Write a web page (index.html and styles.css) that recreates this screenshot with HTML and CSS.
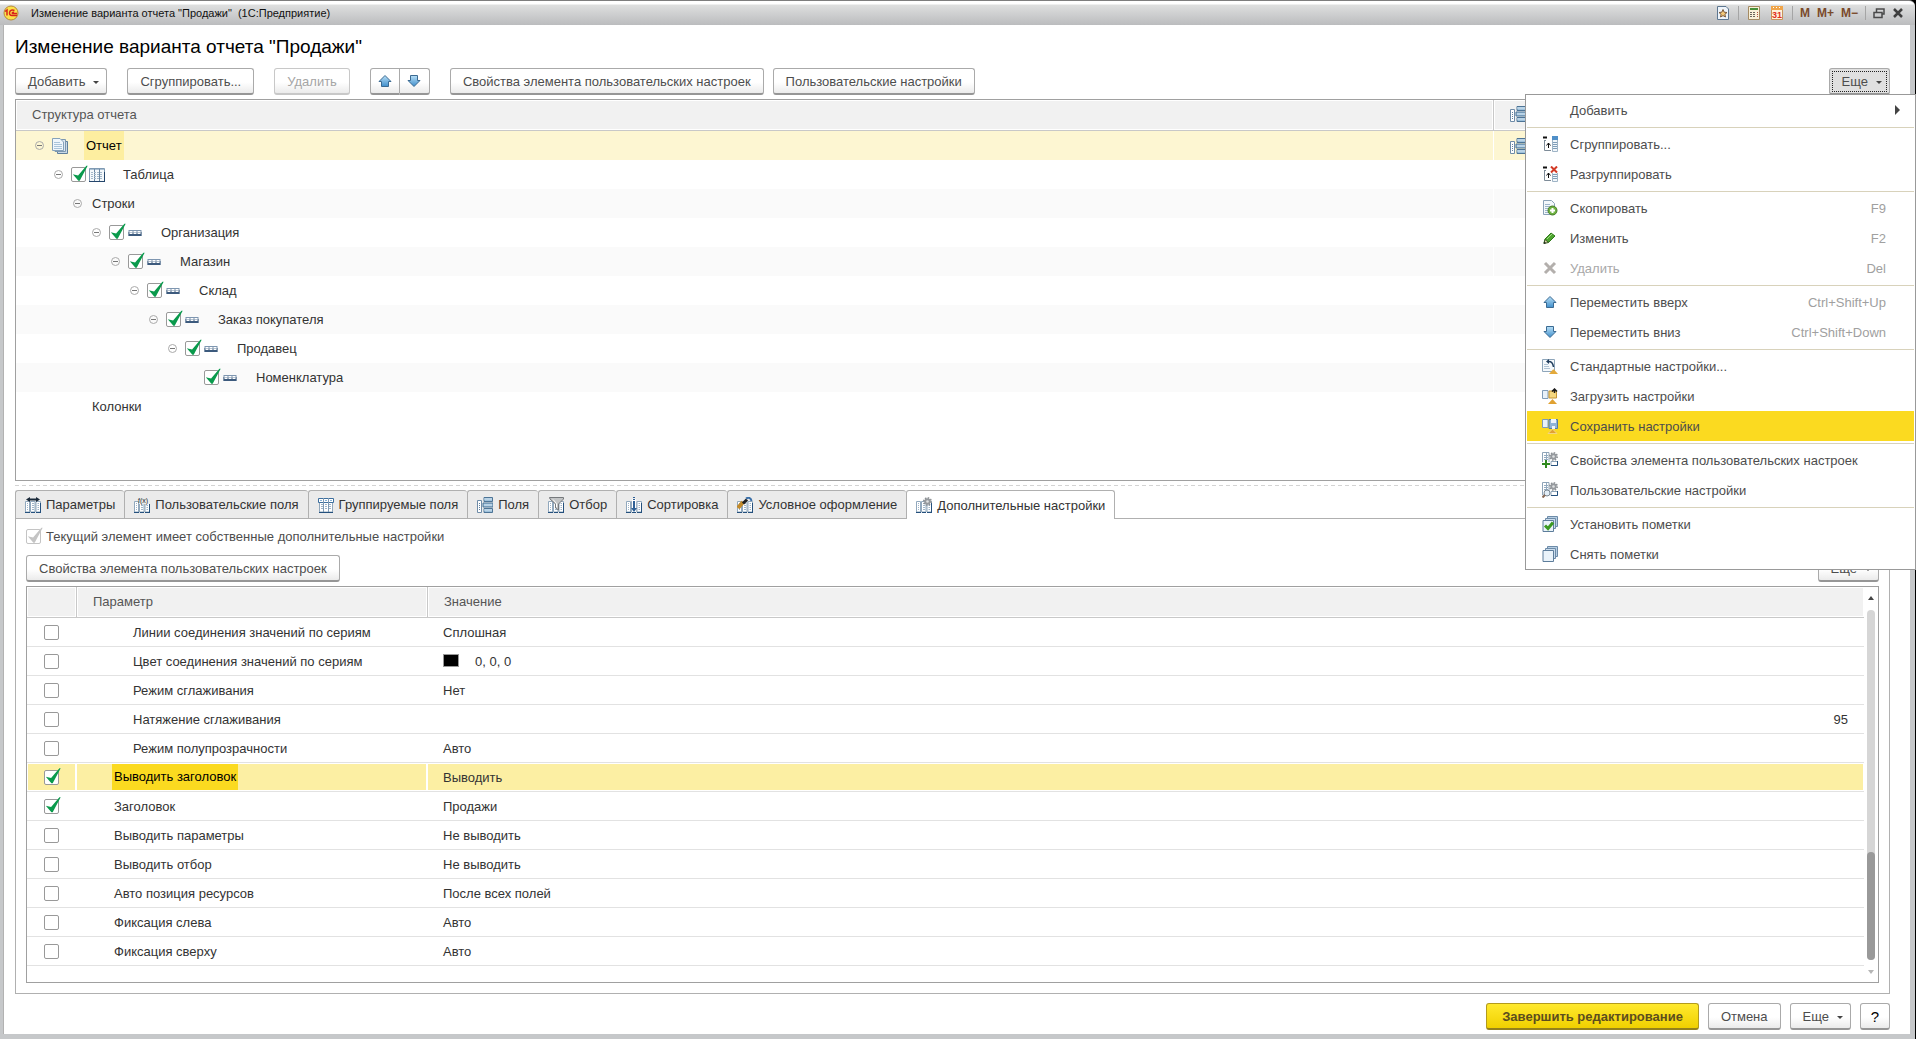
FILE: index.html
```html
<!DOCTYPE html>
<html lang="ru">
<head>
    <meta charset="UTF-8">
    <meta name="viewport" content="width=device-width, initial-scale=1.0">
    <title>Изменение варианта отчета "Продажи"</title>
    <link rel="stylesheet" href="styles.css">
</head>
<body>
    <!-- Иконки -->
    <svg class="sprite" xmlns="http://www.w3.org/2000/svg">
        <linearGradient id="blue" x1="0" y1="0" x2="0" y2="1">
            <stop offset="0" stop-color="#b9e0f7"/>
            <stop offset="1" stop-color="#3f8ecb"/>
        </linearGradient>
        <symbol id="i-up" viewBox="0 0 16 16">
            <path d="M8 2.5 14 8.5H11.5V13.5H4.5V8.5H2Z" fill="url(#blue)" stroke="#3b6a92"/>
        </symbol>
        <symbol id="i-down" viewBox="0 0 16 16">
            <path d="M8 13.5 14 7.5H11.5V2.5H4.5V7.5H2Z" fill="url(#blue)" stroke="#3b6a92"/>
        </symbol>
        <symbol id="i-report" viewBox="0 0 16 16">
            <path d="M5.5 3.5H15.5V15.5H5.5Z" fill="#c9d9e8" stroke="#5f7f9c"/>
            <path d="M3 1.5H13.5V13.5H3Z" fill="#dce8f2" stroke="#7d98b0"/>
            <path d="M.5.5H8L11.5 4V12.5H.5Z" fill="#eff6fc" stroke="#86a2ba"/>
            <path d="M2 4.5H8M2 6.5H10M2 8.5H10M2 10.5H10" stroke="#a9c4da"/>
        </symbol>
        <symbol id="i-table" viewBox="0 0 16 16">
            <path d="M.5 1.5H15.5V14.5H.5Z" fill="#f4f8fb" stroke="#7f9ab3"/>
            <path d="M1 2.5H15" stroke="#a9bfd2"/>
            <path d="M5.5 2V14M10.5 2V14" stroke="#6b88a4"/>
            <path d="M2 5.5H14M2 7.5H14M2 9.5H14M2 11.5H14" stroke="#a3b7c9" stroke-dasharray="2 1"/>
            <path d="M0 14.5H16M15.5 5V15" stroke="#24456b"/>
        </symbol>
        <symbol id="i-group" viewBox="0 0 13 16">
            <path d="M0 5H13V11H0Z" fill="#7e96b0"/>
            <path d="M0 7H13V11H0Z" fill="#3c5a7d"/>
            <path d="M1 6H4V9H1ZM5 6H8V9H5ZM9 6H12V9H9Z" fill="#fff"/>
            <path d="M2 7.5H3M6 7.5H7M10 7.5H11" stroke="#6d8aa8"/>
        </symbol>
        <symbol id="i-cols" viewBox="0 0 16 16">
            <path d="M.5 4.5H4.5V15H.5ZM5.5 4.5H10V15H5.5ZM11 4.5H15.5V15H11Z" fill="#fff" stroke="#91a8bd"/>
            <path d="M2 6.5H3M7 6.5H9M12.5 6.5H14M2 8.5H3M7 8.5H9M12.5 8.5H14M2 10.5H3M7 10.5H9M12.5 10.5H14M2 12.5H3M7 12.5H9M12.5 12.5H14" stroke="#9fb4c8"/>
            <path d="M0 15.5H5M6 15.5H10M11 15.5H16M15.5 6V16" stroke="#24507d"/>
        </symbol>
        <symbol id="i-params" viewBox="0 0 16 16">
            <use href="#i-cols"/>
            <path d="M4 2.5H12" stroke="#1b2a3a" stroke-width="2"/>
            <path d="M5 0V5L1 2.5ZM11 0V5L15 2.5Z" fill="#1b2a3a"/>
        </symbol>
        <symbol id="i-grouped" viewBox="0 0 16 16">
            <path d="M1.5 5V15H14.5V5" fill="#fff" stroke="#91a8bd"/>
            <path d="M.5 1.5H15.5V5.5H.5Z" fill="#fff" stroke="#3d6f9e"/>
            <path d="M5.5 1V15M10.5 1V15" stroke="#7e9ab5"/>
            <path d="M2 3.5H4M7 3.5H9M12 3.5H14" stroke="#85b1d6"/>
            <path d="M3 7.5H14M3 9.5H14M3 11.5H14" stroke="#9db3c7" stroke-dasharray="2 2"/>
            <path d="M1 15.5H15" stroke="#24507d"/>
        </symbol>
        <symbol id="i-fields" viewBox="0 0 16 16">
            <path d="M.5 3.5H4.5V15.5H.5Z" fill="#fff" stroke="#6f8ca8"/>
            <path d="M2 6.5H3M2 8.5H3M2 10.5H3M2 12.5H3" stroke="#5f7f9e"/>
            <path d="M7 .5H15.5V4.5H7ZM6 6H16V10H6ZM7 11.5H15.5V15.5H7Z" fill="#9fc1db" stroke="#4d7496"/>
            <path d="M7 2H15M7 8H15M7 13H15" stroke="#d3e5f2"/>
        </symbol>
        <symbol id="i-filter" viewBox="0 0 16 16">
            <use href="#i-cols"/>
            <path d="M1.5.5H15.5V2L10.5 7V13L7.5 11V7L2 2Z" fill="#c3c5c6" stroke="#76797c"/>
            <path d="M5 2.5 8.5 6.5V10" fill="none" stroke="#fff"/>
        </symbol>
        <symbol id="i-sort" viewBox="0 0 16 16">
            <use href="#i-cols"/>
            <path d="M6 2H10V15H6Z" fill="#fff"/>
            <path d="M8 0V5" stroke="#2f6096" stroke-width="2" stroke-dasharray="1 1"/>
            <path d="M8 5V12" stroke="#2f6096" stroke-width="2"/>
            <path d="M5 11H11L8 15Z" fill="#2f6096"/>
        </symbol>
        <symbol id="i-brush" viewBox="0 0 16 16">
            <use href="#i-cols"/>
            <path d="M1 11 6 5" stroke="#c28a2b" stroke-width="4"/>
            <path d="M6 6.5 10 2.5" stroke="#222" stroke-width="3"/>
            <path d="M9 1.500C12 0 14 1 14.5 4" fill="none" stroke="#3a6fa8" stroke-width="2"/>
        </symbol>
        <symbol id="i-gear" viewBox="0 0 10 10">
            <circle cx="5" cy="5" r="4" fill="none" stroke="#8b8f93" stroke-width="2" stroke-dasharray="1.6 1.5"/>
            <circle cx="5" cy="5" r="2.5" fill="#dfe1e2" stroke="#95999d" stroke-width="2"/>
        </symbol>
        <symbol id="i-extra" viewBox="0 0 16 16">
            <use href="#i-cols"/>
            <use href="#i-gear" x="7" y="0" width="9" height="9"/>
        </symbol>
        <symbol id="i-togroup" viewBox="0 0 16 16">
            <path d="M1 1.5H5" stroke="#111" stroke-width="2"/>
            <path d="M2.5 4V14.5H9M2.5 4.5H4" fill="none" stroke="#7e8c99"/>
            <path d="M6.5 12V7M4.5 9.5 6.5 7 8.5 9.5" fill="none" stroke="#111"/>
            <path d="M10.5.5H15.5V15.5H10.5Z" fill="#f2f7fb" stroke="#9fb4c6"/>
            <path d="M10 0H16V4H10Z" fill="#4f8fc8"/>
            <path d="M11 6.5H15M11 8.5H15M11 10.5H15M11 12.5H15" stroke="#7f9db8"/>
        </symbol>
        <symbol id="i-ungroup" viewBox="0 0 16 16">
            <use href="#i-togroup"/>
            <path d="M8 0H16V7H8Z" fill="#fff"/>
            <path d="M9 .5 15 6.5M15 .5 9 6.5" stroke="#d23a26" stroke-width="2"/>
        </symbol>
        <symbol id="i-copy" viewBox="0 0 16 16">
            <path d="M1.5.5H9.5L12.5 3.5V14.5H1.5Z" fill="#f3f8fc" stroke="#8aa2b8"/>
            <path d="M3 4.5H8M3 6.5H10M3 8.5H8M3 10.5H7M3 12.5H6" stroke="#9db5ca"/>
            <circle cx="10.5" cy="10.5" r="4.5" fill="#6fb341" stroke="#477c29"/>
            <path d="M10.5 8V13M8 10.5H13" stroke="#fff" stroke-width="2"/>
        </symbol>
        <symbol id="i-pencil" viewBox="0 0 16 16">
            <path d="M2 13 3 9 9 3 13 6 7 12Z" fill="#4da62f" stroke="#2f7a1b"/>
            <path d="M5 9 10 4" stroke="#a5dc83"/>
            <path d="M2 13.5 3 9.5 6.5 12.5Z" fill="#e5dcb0" stroke="#3b5c25"/>
            <path d="M1.5 14 2.5 11.5 4 13Z" fill="#222"/>
        </symbol>
        <symbol id="i-delete" viewBox="0 0 16 16">
            <path d="M3 3 13 13M13 3 3 13" stroke="#b3afac" stroke-width="3"/>
        </symbol>
        <symbol id="i-standard" viewBox="0 0 16 16">
            <path d="M.5 1.5H12.5V13.5H.5Z" fill="#f5f9fc" stroke="#8fa6ba"/>
            <path d="M2 6.5H6M2 8.5H7M2 10.5H8" stroke="#b0c4d5"/>
            <path d="M6 3.500C9 3 11 5 11.5 9" fill="none" stroke="#1f3c5c" stroke-width="1.5"/>
            <path d="M7 1V6L4 3.5Z" fill="#1f3c5c"/>
            <path d="M7 16 11 11.500H12L16 16Z" fill="#e3a93b"/>
        </symbol>
        <symbol id="i-load" viewBox="0 0 16 16">
            <path d="M.5 2.5H6V10.5H.5Z" fill="#e8f1f9" stroke="#7f9cb8"/>
            <path d="M7 3H14.5V10H7Z" fill="#f5d77f" stroke="#c59433"/>
            <path d="M12.5 5V1M10 3.5 12.5 1 15 3.5" fill="none" stroke="#1c1c1c" stroke-width="1.500"/>
            <path d="M6 16 10.5 11 15 16Z" fill="#e0a132"/>
        </symbol>
        <symbol id="i-save" viewBox="0 0 16 16">
            <path d="M.5 1.5H6V9.5H.5Z" fill="#e8f1f9" stroke="#7f9cb8"/>
            <path d="M7 1.5H15.5V10.5H7Z" fill="#8fb3d6" stroke="#557ba3"/>
            <path d="M9 1H14V5H9ZM10 8H13V11H10Z" fill="#eef4fa"/>
            <path d="M6 15.5 10.5 11 15 15.5Z" fill="#e0a132" stroke="#f3d680"/>
        </symbol>
        <symbol id="i-props" viewBox="0 0 16 16">
            <path d="M.5.5H7V13H.5ZM9 9.5H15.5V13.5H9Z" fill="#fff" stroke="#8ea4b8"/>
            <path d="M2 3.5H6M2 5.5H6M2 7.5H6M4.5 1V13" stroke="#93aabf"/>
            <path d="M9 13.5H15.5V9" fill="none" stroke="#24507d"/>
            <use href="#i-gear" x="7" y="0" width="9" height="9"/>
        </symbol>
        <symbol id="i-propsadd" viewBox="0 0 16 16">
            <use href="#i-props"/>
            <path d="M4 8V16M0 12H8" stroke="#fff" stroke-width="4"/>
            <path d="M4 8V16M0 12H8" stroke="#2f8a1f" stroke-width="2"/>
        </symbol>
        <symbol id="i-propsfind" viewBox="0 0 16 16">
            <use href="#i-props"/>
            <circle cx="5" cy="11" r="3" fill="#e3eef7" stroke="#7b8994"/>
            <path d="M3 13 .5 15.5" stroke="#8a6a55" stroke-width="2"/>
        </symbol>
        <symbol id="i-stack" viewBox="0 0 16 16">
            <path d="M5.5.5H15.5V10.5H5.5Z" fill="#b7cfe4" stroke="#6d8ba8"/>
            <path d="M3.5 2.5H13.5V12.5H3.5Z" fill="#cbdded" stroke="#6d8ba8"/>
            <path d="M1 4.5H11.5V15.5H1Z" fill="#eaf3fa" stroke="#5d7d9b"/>
        </symbol>
        <symbol id="i-check" viewBox="0 0 16 16">
            <use href="#i-stack"/>
            <path d="M3 9.5 6 12.5 11 6.5" fill="none" stroke="#3c9a22" stroke-width="3"/>
        </symbol>
        <symbol id="i-logo" viewBox="0 0 16 16">
            <circle cx="8" cy="8" r="7" fill="#fbe14a" stroke="#b88a3a"/>
            <path d="M2 6.5 4 5V10.5M11.5 5.500C9.500 4.500 6.500 5 6.500 8S8.500 10.500 14 10.500M11 7.500C9.500 6.800 8.500 8.500 10 8.500H14" fill="none" stroke="#d8241c" stroke-width="1.500"/>
        </symbol>
        <symbol id="i-star" viewBox="0 0 14 16">
            <path d="M1.5 1.5H10L12.5 4V14.5H1.5Z" fill="#eef4fa" stroke="#5c7690"/>
            <path d="M7 4.5 8.2 7.2 11 7.5 8.9 9.3 9.5 12 7 10.6 4.5 12 5.1 9.3 3 7.5 5.8 7.2Z" fill="#f3c878" stroke="#7c5a3a"/>
        </symbol>
        <symbol id="i-calc" viewBox="0 0 14 16">
            <path d="M1.5 1.5H12.5V14.5H1.5Z" fill="#f8f0d8" stroke="#a58b62"/>
            <path d="M3 4H11" stroke="#47913a" stroke-width="2"/>
            <path d="M3 7.5H9M3 9.5H9M3 11.5H9" stroke="#6b665c" stroke-dasharray="2 1"/>
            <path d="M10.5 7V12" stroke="#b5503a" stroke-dasharray="1 1"/>
        </symbol>
        <symbol id="i-restore" viewBox="0 0 12 12">
            <path d="M3.5 5V2H11V7H9M1 5.5H9V10.5H1Z" fill="none" stroke="#4a4a4a" stroke-width="1.5"/>
        </symbol>
        <symbol id="i-close" viewBox="0 0 12 12">
            <path d="M2 2 10 10M10 2 2 10" stroke="#3f3f3f" stroke-width="2.5"/>
        </symbol>
    </svg>

    <div class="window">
        <header class="titlebar">
            <svg class="icon"><use href="#i-logo"/></svg>
            <span class="titlebar-text">Изменение варианта отчета "Продажи"&nbsp; (1С:Предприятие)</span>
            <div class="titlebar-tools">
                <button aria-label="Избранное"><svg class="icon"><use href="#i-star"/></svg></button>
                <i class="tool-sep"></i>
                <button aria-label="Калькулятор"><svg class="icon"><use href="#i-calc"/></svg></button>
                <button aria-label="Календарь">
                    <svg class="icon" viewBox="0 0 14 16">
                        <path d="M1.5 1.5H12.5V14.5H1.5Z" fill="#fff2d8" stroke="#c8935a"/>
                        <path d="M1 1H13V5H1Z" fill="#f0a54a"/>
                        <path d="M3 2.5H11" stroke="#fff" stroke-dasharray="1 2"/>
                        <text class="calendar-day" x="7" y="13">31</text>
                    </svg>
                </button>
                <i class="tool-sep"></i>
                <button class="memory">M</button>
                <button class="memory">M+</button>
                <button class="memory">M−</button>
                <i class="tool-sep"></i>
                <button aria-label="Восстановить"><svg class="icon-small"><use href="#i-restore"/></svg></button>
                <button aria-label="Закрыть"><svg class="icon-small"><use href="#i-close"/></svg></button>
            </div>
        </header>

        <main class="content">
            <h1>Изменение варианта отчета "Продажи"</h1>

            <div class="toolbar">
                <button class="btn">Добавить<i class="caret"></i></button>
                <button class="btn">Сгруппировать...</button>
                <button class="btn" disabled>Удалить</button>
                <div class="btn-group">
                    <button class="btn" aria-label="Переместить вверх"><svg class="icon"><use href="#i-up"/></svg></button>
                    <button class="btn" aria-label="Переместить вниз"><svg class="icon"><use href="#i-down"/></svg></button>
                </div>
                <div class="btn-pair">
                    <button class="btn">Свойства элемента пользовательских настроек</button>
                    <button class="btn">Пользовательские настройки</button>
                </div>
                <div class="more">
                    <button class="btn btn-open">Еще<i class="caret"></i></button>
                    <ul class="menu">
                        <li><button><span class="icon"></span>Добавить<i class="submenu-arrow"></i></button></li>
                        <li class="sep"></li>
                        <li><button><svg class="icon"><use href="#i-togroup"/></svg>Сгруппировать...</button></li>
                        <li><button><svg class="icon"><use href="#i-ungroup"/></svg>Разгруппировать</button></li>
                        <li class="sep"></li>
                        <li><button><svg class="icon"><use href="#i-copy"/></svg>Скопировать<kbd>F9</kbd></button></li>
                        <li><button><svg class="icon"><use href="#i-pencil"/></svg>Изменить<kbd>F2</kbd></button></li>
                        <li><button disabled><svg class="icon"><use href="#i-delete"/></svg>Удалить<kbd>Del</kbd></button></li>
                        <li class="sep"></li>
                        <li><button><svg class="icon"><use href="#i-up"/></svg>Переместить вверх<kbd>Ctrl+Shift+Up</kbd></button></li>
                        <li><button><svg class="icon"><use href="#i-down"/></svg>Переместить вниз<kbd>Ctrl+Shift+Down</kbd></button></li>
                        <li class="sep"></li>
                        <li><button><svg class="icon"><use href="#i-standard"/></svg>Стандартные настройки...</button></li>
                        <li><button><svg class="icon"><use href="#i-load"/></svg>Загрузить настройки</button></li>
                        <li><button class="current"><svg class="icon"><use href="#i-save"/></svg>Сохранить настройки</button></li>
                        <li class="sep"></li>
                        <li><button><svg class="icon"><use href="#i-propsadd"/></svg>Свойства элемента пользовательских настроек</button></li>
                        <li><button><svg class="icon"><use href="#i-propsfind"/></svg>Пользовательские настройки</button></li>
                        <li class="sep"></li>
                        <li><button><svg class="icon"><use href="#i-check"/></svg>Установить пометки</button></li>
                        <li><button><svg class="icon"><use href="#i-stack"/></svg>Снять пометки</button></li>
                    </ul>
                </div>
            </div>

            <!-- Дерево структуры отчета -->
            <div class="tree-box">
                <table class="tree">
                    <thead>
                        <tr>
                            <th>Структура отчета</th>
                            <th class="col-icon"><svg class="icon"><use href="#i-fields"/></svg></th>
                        </tr>
                    </thead>
                    <tbody>
                        <tr class="active">
                            <td><div class="node level-0"><button class="toggle" aria-label="Свернуть"></button><svg class="icon"><use href="#i-report"/></svg><span class="label">Отчет</span></div></td>
                            <td class="col-icon"><svg class="icon"><use href="#i-fields"/></svg></td>
                        </tr>
                        <tr>
                            <td><div class="node level-1"><button class="toggle" aria-label="Свернуть"></button><input type="checkbox" id="t1" checked><svg class="icon"><use href="#i-table"/></svg><label class="label" for="t1">Таблица</label></div></td>
                            <td></td>
                        </tr>
                        <tr>
                            <td><div class="node level-2"><button class="toggle" aria-label="Свернуть"></button><span class="label">Строки</span></div></td>
                            <td></td>
                        </tr>
                        <tr>
                            <td><div class="node level-3"><button class="toggle" aria-label="Свернуть"></button><input type="checkbox" id="t2" checked><svg class="icon"><use href="#i-group"/></svg><label class="label" for="t2">Организация</label></div></td>
                            <td></td>
                        </tr>
                        <tr>
                            <td><div class="node level-4"><button class="toggle" aria-label="Свернуть"></button><input type="checkbox" id="t3" checked><svg class="icon"><use href="#i-group"/></svg><label class="label" for="t3">Магазин</label></div></td>
                            <td></td>
                        </tr>
                        <tr>
                            <td><div class="node level-5"><button class="toggle" aria-label="Свернуть"></button><input type="checkbox" id="t4" checked><svg class="icon"><use href="#i-group"/></svg><label class="label" for="t4">Склад</label></div></td>
                            <td></td>
                        </tr>
                        <tr>
                            <td><div class="node level-6"><button class="toggle" aria-label="Свернуть"></button><input type="checkbox" id="t5" checked><svg class="icon"><use href="#i-group"/></svg><label class="label" for="t5">Заказ покупателя</label></div></td>
                            <td></td>
                        </tr>
                        <tr>
                            <td><div class="node level-7"><button class="toggle" aria-label="Свернуть"></button><input type="checkbox" id="t6" checked><svg class="icon"><use href="#i-group"/></svg><label class="label" for="t6">Продавец</label></div></td>
                            <td></td>
                        </tr>
                        <tr>
                            <td><div class="node level-8"><span class="no-toggle"></span><input type="checkbox" id="t7" checked><svg class="icon"><use href="#i-group"/></svg><label class="label" for="t7">Номенклатура</label></div></td>
                            <td></td>
                        </tr>
                        <tr>
                            <td><div class="node level-2"><span class="no-toggle"></span><span class="label">Колонки</span></div></td>
                            <td></td>
                        </tr>
                    </tbody>
                </table>
            </div>

            <div class="splitter"></div>

            <nav class="tabs">
                <button><svg class="icon"><use href="#i-params"/></svg>Параметры</button>
                <button>
                    <svg class="icon" viewBox="0 0 16 16">
                        <use href="#i-cols"/>
                        <path d="M5 0H16V7H5Z" fill="#ebebeb"/>
                        <text class="func-sign" x="4" y="6">f(x)</text>
                    </svg>
                    Пользовательские поля
                </button>
                <button><svg class="icon"><use href="#i-grouped"/></svg>Группируемые поля</button>
                <button><svg class="icon"><use href="#i-fields"/></svg>Поля</button>
                <button><svg class="icon"><use href="#i-filter"/></svg>Отбор</button>
                <button><svg class="icon"><use href="#i-sort"/></svg>Сортировка</button>
                <button><svg class="icon"><use href="#i-brush"/></svg>Условное оформление</button>
                <button class="selected"><svg class="icon"><use href="#i-extra"/></svg>Дополнительные настройки</button>
            </nav>

            <section class="panel">
                <div class="own-settings">
                    <input type="checkbox" id="own" checked disabled>
                    <label for="own">Текущий элемент имеет собственные дополнительные настройки</label>
                </div>
                <div class="panel-toolbar">
                    <button class="btn">Свойства элемента пользовательских настроек</button>
                    <button class="btn">Еще<i class="caret"></i></button>
                </div>

                <div class="grid-box">
                    <table class="grid">
                        <thead>
                            <tr><th class="col-check"></th><th class="col-param">Параметр</th><th>Значение</th></tr>
                        </thead>
                        <tbody>
                            <tr><td><input type="checkbox" id="p1"></td><td class="sub"><label for="p1">Линии соединения значений по сериям</label></td><td>Сплошная</td></tr>
                            <tr><td><input type="checkbox" id="p2"></td><td class="sub"><label for="p2">Цвет соединения значений по сериям</label></td><td><i class="swatch"></i>0, 0, 0</td></tr>
                            <tr><td><input type="checkbox" id="p3"></td><td class="sub"><label for="p3">Режим сглаживания</label></td><td>Нет</td></tr>
                            <tr><td><input type="checkbox" id="p4"></td><td class="sub"><label for="p4">Натяжение сглаживания</label></td><td class="number">95</td></tr>
                            <tr><td><input type="checkbox" id="p5"></td><td class="sub"><label for="p5">Режим полупрозрачности</label></td><td>Авто</td></tr>
                            <tr class="active"><td><input type="checkbox" id="p6" checked></td><td><label for="p6">Выводить заголовок</label></td><td>Выводить</td></tr>
                            <tr><td><input type="checkbox" id="p7" checked></td><td><label for="p7">Заголовок</label></td><td>Продажи</td></tr>
                            <tr><td><input type="checkbox" id="p8"></td><td><label for="p8">Выводить параметры</label></td><td>Не выводить</td></tr>
                            <tr><td><input type="checkbox" id="p9"></td><td><label for="p9">Выводить отбор</label></td><td>Не выводить</td></tr>
                            <tr><td><input type="checkbox" id="p10"></td><td><label for="p10">Авто позиция ресурсов</label></td><td>После всех полей</td></tr>
                            <tr><td><input type="checkbox" id="p11"></td><td><label for="p11">Фиксация слева</label></td><td>Авто</td></tr>
                            <tr><td><input type="checkbox" id="p12"></td><td><label for="p12">Фиксация сверху</label></td><td>Авто</td></tr>
                        </tbody>
                    </table>
                    <div class="scrollbar">
                        <i class="scroll-up"></i>
                        <div class="track"><div class="thumb"></div></div>
                        <i class="scroll-down"></i>
                    </div>
                </div>
            </section>

            <footer class="actions">
                <button class="btn btn-primary">Завершить редактирование</button>
                <button class="btn">Отмена</button>
                <button class="btn">Еще<i class="caret"></i></button>
                <button class="btn btn-help">?</button>
            </footer>
        </main>
    </div>
</body>
</html>
```
FILE: styles.css
```css
* {
    box-sizing: border-box;
}
body {
    margin: 0;
    font-family: "Liberation Sans", Arial, sans-serif;
    font-size: 13px;
    color: #333;
    background: #000;
}
button {
    font: inherit;
    color: inherit;
    background: none;
    border: none;
    padding: 0;
    margin: 0;
}
.sprite {
    position: absolute;
    width: 0;
    height: 0;
}
.icon {
    width: 16px;
    height: 16px;
    flex: none;
}
.icon-small {
    width: 12px;
    height: 12px;
}
.calendar-day {
    font-size: 9px;
    font-weight: bold;
    text-anchor: middle;
    fill: #e0301c;
}
.func-sign {
    font-size: 7px;
    fill: #1b2630;
}

/* Окно */
.window {
    display: flex;
    flex-direction: column;
    min-height: 100vh;
    margin-right: 1px;
    padding: 0 5px 5px 3px;
    background: #c6c8ca;
    border-top: 1px solid #7e7e7e;
    border-radius: 0 6px 0 0;
}
.titlebar {
    display: flex;
    align-items: center;
    height: 24px;
    margin: 0 -5px 0 -3px;
    padding: 0 11px 0 3px;
    background: linear-gradient(#fff 0, #fff 3px, #dedfdf 4px, #bbbcbe 100%);
    border-radius: 0 6px 0 0;
}
.titlebar-text {
    margin-left: 12px;
    font-size: 11px;
    color: #111;
}
.titlebar-tools {
    display: flex;
    align-items: center;
    gap: 7px;
    margin-left: auto;
}
.titlebar-tools button {
    display: flex;
}
.titlebar-tools .memory {
    font-size: 12px;
    font-weight: bold;
    color: #7a4a2b;
}
.tool-sep {
    width: 1px;
    height: 14px;
    background: #a5a5a5;
}
.content {
    flex: 1;
    display: flex;
    flex-direction: column;
    padding: 0 20px 4px 11px;
    background: #fff;
    border-left: 1px solid #b2b2b2;
}
h1 {
    margin: 0;
    font-size: 19px;
    font-weight: normal;
    line-height: 43px;
    color: #000;
}

/* Кнопки */
.btn {
    display: inline-flex;
    align-items: center;
    justify-content: center;
    height: 27px;
    padding: 0 12px;
    color: #4d4d4d;
    white-space: nowrap;
    background: linear-gradient(#fff 55%, #ebebeb);
    border: 1px solid #aaa;
    border-bottom: 2px solid #969696;
    border-radius: 3px;
}
.btn:disabled {
    color: #a5a5a5;
    border-color: #c8c8c8;
}
.caret {
    margin: 2px -5px 0 8px;
    border: 3px solid transparent;
    border-top-color: #444;
    border-bottom: 0;
}
.toolbar {
    display: flex;
    gap: 20px;
    margin-bottom: 4px;
}
.btn-group {
    display: flex;
}
.btn-group .btn {
    width: 30px;
    padding: 0;
}
.btn-group .btn:first-child {
    border-radius: 3px 0 0 3px;
}
.btn-group .btn:last-child {
    border-left: 0;
    border-radius: 0 3px 3px 0;
}
.btn-pair {
    display: flex;
    gap: 9px;
}
.btn-open {
    background: #e0e0e0;
    outline: 1px dotted #222;
    outline-offset: -4px;
}

/* Меню "Еще" */
.more {
    position: relative;
    margin-left: auto;
}
.menu {
    position: absolute;
    z-index: 10;
    top: 26px;
    right: -26px;
    width: 391px;
    margin: 0;
    padding: 0 1px;
    list-style: none;
    background: #fff;
    border: 1px solid #999;
}
.menu button {
    display: flex;
    align-items: center;
    gap: 12px;
    width: 100%;
    height: 30px;
    padding: 0 28px 0 15px;
    color: #4d4d4d;
}
.menu button:disabled {
    color: #a8a8a8;
}
.menu .current {
    background: #fbda20;
}
.menu .sep {
    height: 1px;
    margin: 2px 0 1px;
    background: #d8d2bb;
}
.menu kbd {
    margin-left: auto;
    font: inherit;
    color: #a0a0a0;
}
.submenu-arrow {
    margin: 0 -14px 0 auto;
    border: 5px solid transparent;
    border-left-color: #444;
    border-right: 0;
}

/* Флажки */
input[type="checkbox"] {
    appearance: none;
    position: relative;
    flex: none;
    width: 15px;
    height: 15px;
    margin: 0;
    background: #fff;
    border: 1px solid #999;
    border-radius: 2px;
}
input[type="checkbox"]:checked::after {
    content: "";
    position: absolute;
    top: -3px;
    left: 0;
    width: 16px;
    height: 17px;
    background: #0a9a4c;
    clip-path: polygon(5% 54%, 38% 62%, 90% 4%, 98% 4%, 48% 92%, 40% 92%);
}
input[type="checkbox"]:disabled {
    border-color: #c4c4c4;
}
input[type="checkbox"]:disabled::after {
    background: #c4c4c4;
}

/* Таблицы */
table {
    width: 100%;
    border-collapse: separate;
    border-spacing: 0;
    table-layout: fixed;
}
th {
    height: 31px;
    padding: 0 0 2px 16px;
    font-weight: normal;
    text-align: left;
    color: #555;
    background: #f1f1f1;
    border-bottom: 1px solid #c8c8c8;
    box-shadow: inset 0 0 0 1px #fff;
}
th + th {
    border-left: 1px solid #c8c8c8;
}
td {
    height: 29px;
    padding: 0 0 0 16px;
}
.tree-box {
    flex: none;
    min-height: 382px;
    border: 1px solid #a0a0a0;
}
.tree td {
    padding: 0;
}
.tree td + td {
    border-left: 1px solid #fff;
}
.tree .col-icon {
    width: 396px;
    padding-left: 16px;
}
.tree .icon {
    display: block;
}
.tree tbody tr:nth-child(odd) {
    background: #fafafa;
}
.tree tbody tr.active {
    background: #fdf6d2;
}
.node {
    --level: 0;
    display: flex;
    align-items: center;
    height: 29px;
    padding-left: calc(19px + 19px * var(--level));
}
.level-1 { --level: 1; }
.level-2 { --level: 2; }
.level-3 { --level: 3; }
.level-4 { --level: 4; }
.level-5 { --level: 5; }
.level-6 { --level: 6; }
.level-7 { --level: 7; }
.level-8 { --level: 8; }
.node input {
    margin-right: 3px;
}
.node .icon {
    margin-right: 16px;
}
.node .label {
    padding: 0 2px;
    line-height: 29px;
}
.active .label {
    color: #000;
    background: #fdeea0;
}
.toggle,
.no-toggle {
    flex: none;
    width: 9px;
    height: 9px;
    margin-right: 8px;
}
.toggle {
    border: 1px solid #aaa;
    border-radius: 50%;
    background: linear-gradient(#777, #777) center / 5px 1px no-repeat;
}
.splitter {
    flex: none;
    height: 9px;
    background: repeating-linear-gradient(90deg, #d4d4d4 0, #d4d4d4 4px, transparent 4px, transparent 7px) 0 4px / 100% 1px no-repeat;
}

/* Закладки */
.tabs {
    display: flex;
    border-bottom: 1px solid #b0b0b0;
}
.tabs button {
    display: flex;
    align-items: center;
    gap: 5px;
    height: 28px;
    padding: 0 9px;
    background: #ebebeb;
    border: 1px solid #b0b0b0;
    border-right-width: 0;
    border-bottom: 0;
    border-radius: 3px 3px 0 0;
}
.tabs .selected {
    height: 29px;
    margin-bottom: -1px;
    background: #fff;
    border-right-width: 1px;
}
.panel {
    flex: 1;
    display: flex;
    flex-direction: column;
    padding: 10px;
    border: 1px solid #b0b0b0;
    border-top: 0;
}
.own-settings {
    display: flex;
    align-items: center;
    gap: 5px;
    margin-bottom: 11px;
    color: #4d4d4d;
}
.panel-toolbar {
    display: flex;
    justify-content: space-between;
    margin-bottom: 4px;
}
.grid-box {
    flex: 1;
    display: flex;
    border: 1px solid #a0a0a0;
}
.grid {
    align-self: flex-start;
    flex: 1;
}
.grid .col-check {
    width: 49px;
}
.grid .col-param {
    width: 351px;
}
.grid td {
    border-bottom: 1px solid #e2e2e2;
}
.grid td:first-child {
    padding-left: 17px;
}
.grid td:nth-child(2) {
    padding-left: 36px;
}
.grid td.sub {
    padding-left: 55px;
}
.grid td.number {
    text-align: right;
    padding-right: 16px;
}
.grid td input {
    display: block;
}
.grid .active td {
    background: #fcefa3;
    box-shadow: inset 0 0 0 1px #fff;
}
.grid .active label {
    display: inline-block;
    padding: 0 2px;
    line-height: 26px;
    color: #000;
    background: #fbda20;
}
.grid label {
    padding: 0 2px;
}
.swatch {
    display: inline-block;
    width: 16px;
    height: 13px;
    margin-right: 16px;
    vertical-align: -1px;
    background: #000;
    border: 1px solid #999;
}

/* Полоса прокрутки */
.scrollbar {
    display: flex;
    flex-direction: column;
    align-items: center;
    justify-content: space-between;
    width: 14px;
    padding: 9px 0 8px;
}
.scroll-up {
    border: 3px solid transparent;
    border-bottom: 4px solid #444;
    border-top: 0;
}
.scroll-down {
    border: 3px solid transparent;
    border-top: 4px solid #b5b5b5;
    border-bottom: 0;
}
.track {
    flex: 1;
    display: flex;
    flex-direction: column;
    justify-content: flex-end;
    width: 8px;
    margin: 10px 0;
    background: #d6d6d6;
    border-radius: 4px;
}
.thumb {
    height: 31%;
    background: #999;
    border-radius: 4px;
}
.actions {
    display: flex;
    justify-content: flex-end;
    gap: 9px;
    margin-top: 9px;
}
.btn-primary {
    padding: 0 15px;
    font-weight: bold;
    color: #5c4d1e;
    background: linear-gradient(#ffe92e, #f0d000);
    border-color: #b39b1c;
    border-bottom-color: #94811c;
}
.btn-help {
    width: 30px;
    padding: 0;
    font-size: 15px;
    color: #000;
}
```
